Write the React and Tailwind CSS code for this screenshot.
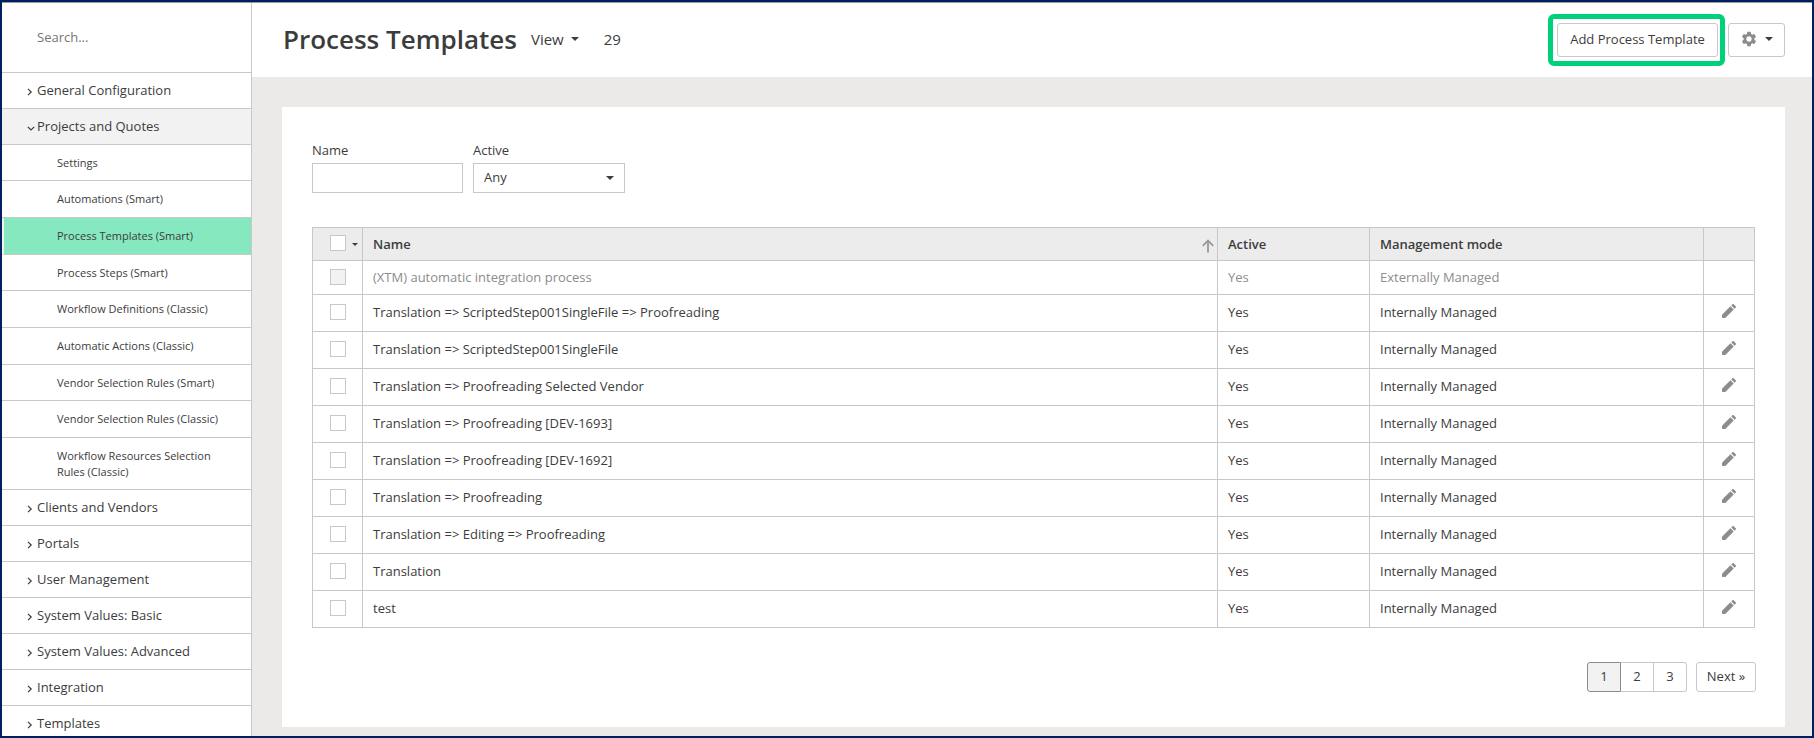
import React, { useState } from "react";
import { MdSettings } from "react-icons/md";

const projectItems = [
  "Settings",
  "Automations (Smart)",
  "Process Templates (Smart)",
  "Process Steps (Smart)",
  "Workflow Definitions (Classic)",
  "Automatic Actions (Classic)",
  "Vendor Selection Rules (Smart)",
  "Vendor Selection Rules (Classic)",
  "Workflow Resources Selection Rules (Classic)",
];

const sections = [
  { title: "General Configuration" },
  { title: "Projects and Quotes", items: projectItems },
  { title: "Clients and Vendors" },
  { title: "Portals" },
  { title: "User Management" },
  { title: "System Values: Basic" },
  { title: "System Values: Advanced" },
  { title: "Integration" },
  { title: "Templates" },
];

const templates = [
  { name: "(XTM) automatic integration process", mode: "Externally Managed", locked: true },
  { name: "Translation => ScriptedStep001SingleFile => Proofreading" },
  { name: "Translation => ScriptedStep001SingleFile" },
  { name: "Translation => Proofreading Selected Vendor" },
  { name: "Translation => Proofreading [DEV-1693]" },
  { name: "Translation => Proofreading [DEV-1692]" },
  { name: "Translation => Proofreading" },
  { name: "Translation => Editing => Proofreading" },
  { name: "Translation" },
  { name: "test" },
];

const Caret = ({ className = "w-2 h-1" }) => (
  <svg viewBox="0 0 8 4" className={className} fill="currentColor" aria-hidden="true">
    <path d="M0 0h8L4 4z" />
  </svg>
);

const Chevron = ({ open }) => (
  <svg
    viewBox="0 0 8 8"
    className="w-2 h-2 mt-0.5 shrink-0"
    fill="none"
    stroke="currentColor"
    strokeWidth="1.2"
    aria-hidden="true"
  >
    <path d={open ? "M0.8 2.8 4 6 7.2 2.8" : "M1 0.8 4.2 4 1 7.2"} />
  </svg>
);

const SortArrow = () => (
  <svg
    viewBox="0 0 12 14"
    className="mt-0.5 h-[14px] w-3 text-[#999999]"
    fill="none"
    stroke="currentColor"
    strokeWidth="1.8"
    aria-hidden="true"
  >
    <path d="M6 13.5V2M0.8 6.8 6 1.6l5.2 5.2" />
  </svg>
);

const Pencil = () => (
  <svg viewBox="0 0 14 14" className="h-[14px] w-[14px]" fill="currentColor" aria-hidden="true">
    <path d="M0 13.3v-2.6L8.4 2.3l3.3 3.3L3.3 14H.7a.7.7 0 0 1-.7-.7z" />
    <path d="M9.3 1.4 10.4.3a.9.9 0 0 1 1.3 0l2 2a.9.9 0 0 1 0 1.3l-1.1 1.1z" />
  </svg>
);

const Checkbox = ({ label, disabled = false }) => (
  <input
    type="checkbox"
    aria-label={label}
    disabled={disabled}
    className="block w-4 h-4 shrink-0 appearance-none border border-[#c8c8c8] bg-white checked:bg-[#85e8be] disabled:bg-[#f2f2f2]"
  />
);

const Sidebar = () => {
  const [open, setOpen] = useState("Projects and Quotes");

  return (
    <aside className="w-[250px] shrink-0 overflow-hidden border-r border-[#c8c8c8] bg-white">
      <div className="flex h-[70px] items-center border-b border-[#c8c8c8] pt-px pl-[35px]">
        <input
          type="search"
          aria-label="Search"
          placeholder="Search..."
          className="w-full outline-none placeholder:text-[#757575]"
        />
      </div>

      <nav>
        {sections.map(({ title, items }) => (
          <div key={title}>
            <button
              type="button"
              aria-expanded={open === title}
              onClick={() => setOpen(open === title ? "" : title)}
              className={`flex h-9 w-full items-center gap-[2px] border-b border-[#c8c8c8] pl-[25px] text-left ${
                open === title ? "bg-[#f2f2f2]" : ""
              }`}
            >
              <Chevron open={open === title} />
              {title}
            </button>

            {items && open === title && (
              <ul className="text-[11px]">
                {items.map((item) => (
                  <li
                    key={item}
                    className={`flex min-h-[37px] items-center border-b border-[#c8c8c8] last:min-h-[52px] nth-[3n+1]:min-h-9 ${
                      item === "Process Templates (Smart)"
                        ? "border-l-2 border-l-[#f2f2f2] bg-[#85e8be] pl-[53px]"
                        : "pl-[55px]"
                    }`}
                  >
                    <a href="#" className="py-[9px] pr-7 leading-4">
                      {item}
                    </a>
                  </li>
                ))}
              </ul>
            )}
          </div>
        ))}
      </nav>
    </aside>
  );
};

const Header = () => (
  <header className="flex h-[74px] shrink-0 items-center bg-white pr-[27px] pl-[31px]">
    <div className="flex items-center pb-0.5 text-[15px]">
      <h1 className="text-[26px] font-semibold">Process Templates</h1>
      <button type="button" className="ml-[14px] flex items-center gap-[7px]">
        View
        <Caret />
      </button>
      <span className="ml-[25px]">29</span>
    </div>

    <div className="ml-auto flex items-center gap-[3px]">
      <div className="rounded-md border-5 border-[#00cf7b] p-1 pr-0.5">
        <button
          type="button"
          className="block h-[34px] w-[161px] rounded-[3px] border border-[#c8c8c8] bg-white"
        >
          Add Process Template
        </button>
      </div>
      <button
        type="button"
        aria-label="Settings"
        className="flex h-[34px] w-[57px] items-center justify-center gap-[7px] rounded-[3px] border border-[#c8c8c8] bg-white pb-0.5"
      >
        <MdSettings className="h-[18px] w-[18px] text-[#8c8c8c]" />
        <Caret />
      </button>
    </div>
  </header>
);

const Filters = () => (
  <form className="flex gap-[10px]">
    <div>
      <label htmlFor="filter-name" className="block pb-[3px] leading-5">
        Name
      </label>
      <input
        id="filter-name"
        type="text"
        className="block h-[30px] w-[151px] border border-[#c8c8c8] px-[10px]"
      />
    </div>
    <div>
      <label htmlFor="filter-active" className="block pb-[3px] leading-5">
        Active
      </label>
      <div className="relative">
        <select
          id="filter-active"
          className="block h-[30px] w-[152px] appearance-none border border-[#c8c8c8] bg-white px-[10px]"
        >
          <option>Any</option>
          <option>Yes</option>
          <option>No</option>
        </select>
        <Caret className="pointer-events-none absolute top-[13px] right-[11px] h-1 w-2" />
      </div>
    </div>
  </form>
);

const TemplatesTable = () => (
  <table className="mt-[34px] w-full table-fixed border-collapse text-left [&_td]:border [&_td]:border-[#c8c8c8] [&_td]:px-[10px] [&_th]:border [&_th]:border-[#c8c8c8] [&_th]:px-[10px]">
    <colgroup>
      <col className="w-[50px]" />
      <col />
      <col className="w-[152px]" />
      <col className="w-[334px]" />
      <col className="w-[51px]" />
    </colgroup>
    <thead className="bg-[#ececec]">
      <tr className="h-[33px] [&>th]:pt-px [&>th]:font-semibold">
        <th>
          <div className="flex items-center gap-[6px] pb-[3px] pl-[7px]">
            <Checkbox label="Select all" />
            <Caret className="mt-0.5 h-[3px] w-[6px] shrink-0" />
          </div>
        </th>
        <th>
          <div className="-mr-[7px] flex items-center justify-between">
            Name
            <SortArrow />
          </div>
        </th>
        <th>Active</th>
        <th>Management mode</th>
        <th aria-label="Actions" />
      </tr>
    </thead>
    <tbody>
      {templates.map(({ name, mode = "Internally Managed", locked = false }) => (
        <tr key={name} className={locked ? "h-[34px] text-[#8c8c8c]" : "h-[37px]"}>
          <td>
            <div className="pb-0.5 pl-[7px]">
              <Checkbox label={`Select ${name}`} disabled={locked} />
            </div>
          </td>
          <td>{name}</td>
          <td>Yes</td>
          <td>{mode}</td>
          <td>
            {!locked && (
              <button
                type="button"
                aria-label={`Edit ${name}`}
                className="mx-auto block pb-1 text-[#8c8c8c]"
              >
                <Pencil />
              </button>
            )}
          </td>
        </tr>
      ))}
    </tbody>
  </table>
);

const Pagination = () => (
  <nav aria-label="Pages" className="-mr-px mt-[34px] flex justify-end gap-[9px]">
    <div className="flex">
      <button
        type="button"
        aria-current="page"
        className="h-[30px] w-[34px] rounded-l-[3px] border border-[#8c8c8c] bg-[#f2f2f2]"
      >
        1
      </button>
      <button type="button" className="h-[30px] w-[33px] border-y border-r border-[#c8c8c8]">
        2
      </button>
      <button
        type="button"
        className="h-[30px] w-[33px] rounded-r-[3px] border-y border-r border-[#c8c8c8]"
      >
        3
      </button>
    </div>
    <button type="button" className="h-[30px] w-[60px] rounded-[3px] border border-[#c8c8c8]">
      Next »
    </button>
  </nav>
);

const App = () => (
  <div className="flex h-screen overflow-hidden border-2 border-[#002060] font-['Open_Sans',sans-serif] text-[13px] text-[#3c3c3c]">
    <div className="flex min-w-0 flex-1 border-t border-[#999999]">
      <Sidebar />
      <div className="flex min-w-0 flex-1 flex-col bg-[#ebeae8]">
        <Header />
        <main className="mt-[30px] mr-[27px] mb-[9px] ml-[30px] flex-1 bg-white px-[30px] py-[33px]">
          <Filters />
          <TemplatesTable />
          <Pagination />
        </main>
      </div>
    </div>
  </div>
);

export default App;
